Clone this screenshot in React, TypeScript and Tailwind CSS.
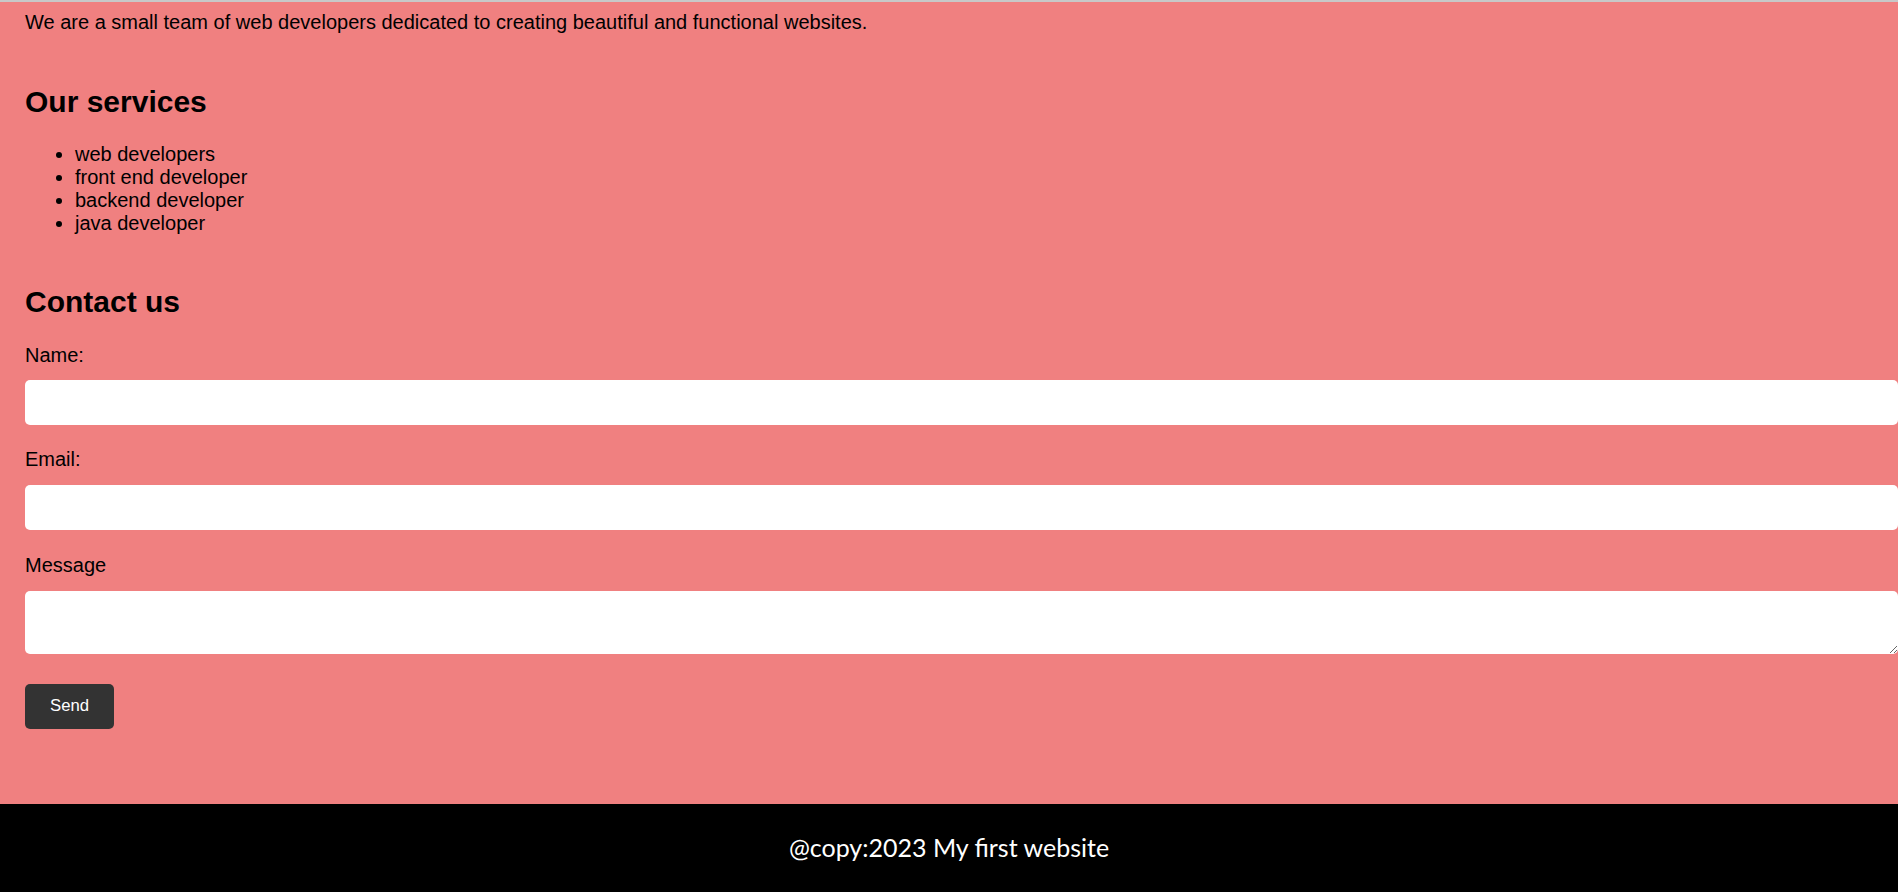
const services = ['web developers', 'front end developer', 'backend developer', 'java developer'];

function Field({ label, id, top }: { label: string; id: string; top: string }) {
  return (
    <div className={top}>
      <label htmlFor={id} className="block text-[20px] leading-[23px]">
        {label}
      </label>
      <input
        id={id}
        type="text"
        className="mt-[13.5px] block h-[45px] w-[1873px] rounded-[5px] border-0 bg-white px-3 outline-none"
      />
    </div>
  );
}

export default function App() {
  return (
    <div className="min-h-[892px] bg-[#f08080] font-['Liberation_Sans',Arial,sans-serif] text-black">
      <div className="h-[2px] bg-[#c8c8c8]" />

      <main className="overflow-hidden pl-[25px] pb-[75px]">
        <p className="mt-[9px] text-[20px] leading-[23px]">
          We are a small team of web developers dedicated to creating beautiful and functional websites.
        </p>

        {/* Services */}
        <h2 className="mt-[51px] text-[30px] font-bold leading-[34px]">Our services</h2>
        <ul className="mt-[23.5px] list-disc pl-[50px] text-[20px] leading-[23px]">
          {services.map((s) => (
            <li key={s}>{s}</li>
          ))}
        </ul>

        {/* Contact */}
        <h2 className="mt-[50px] text-[30px] font-bold leading-[34px]">Contact us</h2>
        <form onSubmit={(e) => e.preventDefault()}>
          <Field label="Name:" id="name" top="mt-[25px]" />
          <Field label="Email:" id="email" top="mt-[23px]" />
          <div className="mt-[24.5px]">
            <label htmlFor="message" className="block text-[20px] leading-[23px]">
              Message
            </label>
            <textarea
              id="message"
              className="mt-[13.5px] block h-[63px] w-[1873px] rounded-[5px] border-0 bg-white px-3 py-2 outline-none"
            />
          </div>
          <button
            type="submit"
            className="mt-[30px] flex h-[45px] w-[89px] items-center justify-center rounded-[5px] bg-[#333333] text-[16.7px] text-white"
          >
            Send
          </button>
        </form>
      </main>

      <footer className="flex h-[88px] items-center justify-center bg-black">
        <p className="font-['Lato',sans-serif] text-[25px] text-white">@copy:2023 My first website</p>
      </footer>
    </div>
  );
}
